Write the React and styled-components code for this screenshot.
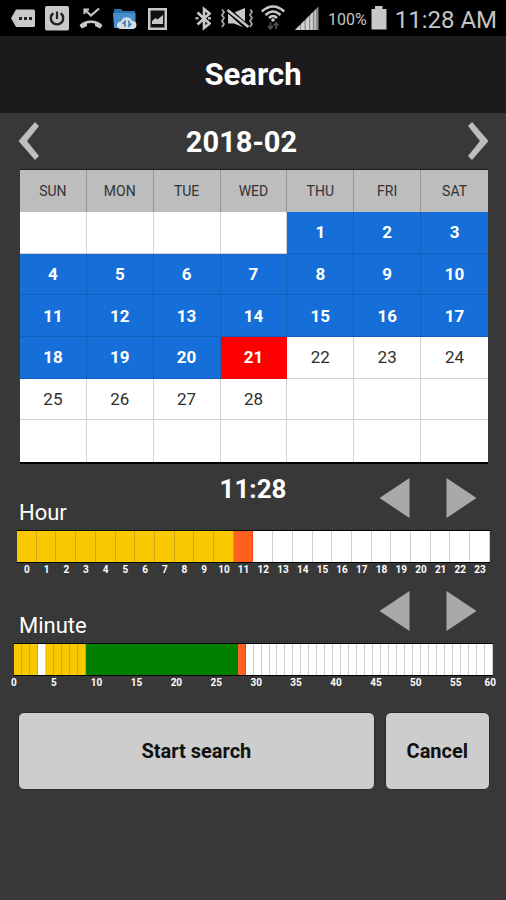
import React from 'react';
import styled, { createGlobalStyle } from 'styled-components';

const GlobalStyle = createGlobalStyle`
  * {
    box-sizing: border-box;
  }
  body {
    margin: 0;
    background-color: #383838;
    font-family: Roboto, "Liberation Sans", sans-serif;
  }
  button {
    font-family: inherit;
    cursor: pointer;
  }
`

const Page = styled.div`
  min-height: 100vh;
  background-color: #383838;
  color: white;
`

const StatusBar = styled.div`
  display: flex;
  align-items: center;
  justify-content: space-between;
  height: 36px;
  padding: 0 9px 0 11px;
  background-color: black;
  color: #c4c4c4;
  svg {
    display: block;
    flex: none;
  }
`

const StatusGroup = styled.div`
  display: flex;
  align-items: center;
  gap: ${props => props.$gap}px;
`

const Percent = styled.span`
  font-size: 16px;
  line-height: 40px;
  height: 36px;
`

const Clock = styled.span`
  font-size: 24px;
  line-height: 40px;
  height: 36px;
  white-space: nowrap;
`

const Header = styled.header`
  display: flex;
  align-items: center;
  justify-content: center;
  height: 77px;
  background-color: #1c1a1d;
`

const Title = styled.h1`
  margin: 0;
  font-size: 31px;
  line-height: 40px;
  font-weight: 700;
`

const MonthBar = styled.div`
  display: flex;
  align-items: center;
  height: 56px;
  padding: 0 17px 0 18px;
`

const MonthTitle = styled.h2`
  flex: 1;
  margin: 0;
  padding: 2px 24px 0 0;
  text-align: center;
  font-size: 29px;
  line-height: 40px;
  font-weight: 700;
`

const IconButton = styled.button`
  display: block;
  padding: 0;
  border: none;
  background: none;
  color: ${props => props.$color};
  svg {
    display: block;
  }
`

const CalendarWrap = styled.div`
  padding: 0 18px 0 20px;
`

const Calendar = styled.table`
  width: 100%;
  height: 295px;
  table-layout: fixed;
  border-collapse: separate;
  border-spacing: 0;
  border-top: 1px solid #1a1a1a;
  border-bottom: 2px solid black;
  text-align: center;
`

const DayName = styled.th`
  height: 42px;
  padding: 0;
  background-color: #bdbdbd;
  color: #333;
  font-size: 14px;
  font-weight: 400;
  border-right: 1px solid #969696;
  &:last-child {
    border-right: none;
  }
`

const fills = {
  recorded: '#166fd8',
  selected: '#ff0000',
  plain: '#ffffff',
}

const lines = {
  recorded: '#1260bd',
  selected: '#ff0000',
  plain: '#d2d2d2',
}

const Day = styled.td`
  height: 41px;
  padding: 0;
  background-color: ${props => fills[props.$kind]};
  color: ${props => (props.$kind === 'plain' ? '#2e2e2e' : 'white')};
  font-size: 17px;
  line-height: 20px;
  font-weight: ${props => (props.$kind === 'plain' ? 400 : 700)};
  border-right: 1px solid ${props => lines[props.$kind]};
  border-bottom: 1px solid ${props => lines[props.$kind]};
  &:last-child {
    border-right: none;
  }
  tr:last-child & {
    border-bottom: none;
  }
`

const Section = styled.section`
  padding-top: 14px;
`

const SectionHead = styled.div`
  display: grid;
  grid-template-columns: 1fr auto 1fr;
  height: 53px;
  padding: 0 19px;
`

const Label = styled.h3`
  align-self: end;
  margin: 0;
  padding-bottom: 4px;
  font-size: 22px;
  line-height: 28px;
  font-weight: 400;
`

const Time = styled.div`
  font-size: 26px;
  line-height: 22px;
  font-weight: 700;
`

const Arrows = styled.div`
  display: flex;
  align-items: flex-start;
  justify-content: flex-end;
  gap: 36px;
  grid-column: 3;
  padding-right: 10px;
`

const Track = styled.div`
  padding: 0 ${props => props.$right}px 0 ${props => props.$left}px;
`

const Bar = styled.div`
  display: flex;
  height: 33px;
  margin-top: -1px;
  border-top: 1px solid black;
  border-bottom: 1px solid black;
`

const cellFill = {
  yellow: '#fac800',
  green: '#008000',
  orange: '#ff6020',
  white: '#ffffff',
}

const cellLine = {
  yellow: '#cda612',
  green: '#0b700b',
  orange: '#ff4010',
  white: '#cfcfcf',
}

const Cell = styled.div`
  flex: 1;
  background-color: ${props => cellFill[props.$fill]};
  border-right: 1px solid ${props => cellLine[props.$fill]};
`

const Scale = styled.div`
  display: flex;
  height: 14px;
  font-size: 10px;
  line-height: 14px;
  font-weight: 700;
`

const HourScale = styled(Scale)`
  span {
    flex: 1;
    text-align: center;
  }
`

// every mark starts just before its tick, the last one ends at the bar's edge
const MinuteScale = styled(Scale)`
  justify-content: space-between;
  margin: 0 -3px;
  span {
    display: flex;
    width: 6px;
  }
  span:last-child {
    justify-content: flex-end;
  }
`

const Actions = styled.div`
  display: flex;
  gap: 10px;
  padding: 22px 16px 20px 18px;
`

const ActionButton = styled.button`
  flex: ${props => props.$grow};
  height: 78px;
  padding: 0;
  border: 1px solid #2a2a2a;
  border-radius: 6px;
  background-color: #cdcdcd;
  color: #111;
  font-size: 20px;
  font-weight: 700;
`

const dayNames = ['SUN', 'MON', 'TUE', 'WED', 'THU', 'FRI', 'SAT']
const firstWeekday = 4
const daysInMonth = 28
const today = 21

const weeks = Array.from({ length: 6 }, (_, w) =>
  Array.from({ length: 7 }, (_, d) => {
    const day = w * 7 + d - firstWeekday + 1
    return day > 0 && day <= daysInMonth ? day : null
  })
)

const dayKind = (day) => {
  if (!day || day > today) return 'plain'
  return day === today ? 'selected' : 'recorded'
}

const hourFill = (hour) => {
  if (hour < 11) return 'yellow'
  return hour === 11 ? 'orange' : 'white'
}

const minuteFill = (minute) => {
  if (minute === 3) return 'white'
  if (minute < 9) return 'yellow'
  if (minute < 28) return 'green'
  return minute === 28 ? 'orange' : 'white'
}

const hours = Array.from({ length: 24 }, (_, i) => i)
const minutes = Array.from({ length: 60 }, (_, i) => i)
const minuteMarks = Array.from({ length: 13 }, (_, i) => i * 5)

const LeftIcons = () => (
  <StatusGroup $gap={10}>
    <svg width="24" height="36" viewBox="0 0 24 36">
      <path d="M0 18.3 L5 9.5 H22.5 Q24 9.5 24 11 V25.5 Q24 27 22.5 27 H5 Z" fill="#c8c8c8" />
      <path d="M8 17h3v3H8z M13 17h3v3h-3z M18 17h3v3h-3z" fill="#222" />
    </svg>
    <svg width="24" height="36" viewBox="0 0 24 36">
      <rect x="0" y="6" width="24" height="24.5" rx="2" fill="#c8c8c8" />
      <path d="M8.3 13.2 A6.2 6.2 0 1 0 15.7 13.2" fill="none" stroke="#222" strokeWidth="2.4" />
      <path d="M12 11.5 V19" stroke="#222" strokeWidth="2.2" />
    </svg>
    <svg width="24" height="36" viewBox="0 0 24 36">
      <path d="M0.5 25.5 C5 18.8 19 18.8 23.5 25.5 L21 28.5 L16 26 V23.5 Q12 22.3 8 23.5 V26 L3 28.5 Z" fill="#c8c8c8" />
      <path d="M5.5 14 V9.5 H10 M5.5 9.5 L12 15.5 L20 8.5" fill="none" stroke="#c8c8c8" strokeWidth="2.2" />
    </svg>
    <svg width="24" height="36" viewBox="0 0 24 36">
      <path d="M1 9 H8 L10 11 H22 V27 H1 Z" fill="#2c73ae" />
      <path d="M0 13 H22.5 V28 H1 Z" fill="#4590cc" />
      <path d="M7.5 29 Q3.5 28.5 4 24.8 Q4.6 21.8 8 21.6 Q9.5 17 14 17.2 Q18.2 17.6 19 21 Q23.5 21 23.5 25 Q23.3 28.6 20 29 Z" fill="#d5dde3" />
      <path d="M12 27 V21.5 L9.5 24 M16 20.5 V26 L18.5 23.5" fill="none" stroke="#3b80ba" strokeWidth="1.6" />
    </svg>
    <svg width="21" height="36" viewBox="0 0 21 36">
      <rect x="1" y="8" width="19" height="22" fill="#c8c8c8" />
      <rect x="3.5" y="10.5" width="14" height="17" fill="#111" />
      <path d="M5 24 V21 L8.5 18 L10.5 19.5 L16 15 V24 Z" fill="#c8c8c8" />
    </svg>
  </StatusGroup>
)

const RightIcons = () => (
  <StatusGroup $gap={8}>
    <svg width="16" height="36" viewBox="0 0 16 36">
      <path d="M2.5 12.5 L14.5 23.5 L9 28 V9 L14.5 13.5 L2.5 24.5" fill="none" stroke="#c8c8c8" strokeWidth="2.6" />
      <path d="M0.5 17h3v2.5h-3z M13 17h3v2.5h-3z" fill="#b5b5b5" />
    </svg>
    <svg width="34" height="36" viewBox="0 0 34 36">
      <path d="M9 12.5 H15 L26 8 V28 L15 23.5 H9 Z" fill="#c8c8c8" />
      <path d="M8 9 L29 28" stroke="black" strokeWidth="5.5" />
      <path d="M8.5 10 L29.5 27" stroke="#c8c8c8" strokeWidth="2.6" />
      <path d="M3 9.5 L5 12 L3 15 L5 18 L3 21 L5 24 L3 27 M31.5 9.5 L33 12 L31 15 L33 18 L31 21 L33 24 L31 27" fill="none" stroke="#a5a5a5" strokeWidth="1.8" />
    </svg>
    <svg width="25" height="36" viewBox="0 0 25 36">
      <path d="M0.8 11.5 Q12 1.5 23.2 11.5 M4.5 15 Q12 8 19.5 15 M8 18 Q12 14 16 18" fill="none" stroke="#c8c8c8" strokeWidth="2.5" />
      <circle cx="12" cy="20" r="1.8" fill="#c8c8c8" />
      <path d="M9.5 22.5 V28.5 M7 26 L9.5 28.8 L12 26 M15 29 V23 M12.8 25.5 L15 22.8 L17.5 25.5" fill="none" stroke="#4c4c4c" strokeWidth="1.8" />
    </svg>
    <svg width="26" height="36" viewBox="0 0 26 36">
      <path d="M1 30 L24.5 6.5 V30 Z" fill="#8a8a8a" />
      <path d="M1 30 L6 25 V30 Z M7 24 L10.5 20.5 V30 H7 Z M11.8 19.2 L15 16 V30 H11.8 Z M16.2 14.8 L18.8 12.2 V30 H16.2 Z M20.5 10.5 L21.8 9.2 V30 H20.5 Z" fill="#cfcfcf" />
    </svg>
    <StatusGroup $gap={4}>
      <Percent>100%</Percent>
      <svg width="16" height="36" viewBox="0 0 16 36">
        <path d="M4 6 H11.5 V9 H15.5 V29.5 H0.5 V9 H4 Z" fill="#c8c8c8" />
      </svg>
    </StatusGroup>
    <Clock>11:28 AM</Clock>
  </StatusGroup>
)

const StepArrows = ({ unit }) => (
  <Arrows>
    <IconButton $color="#a9a9a9" aria-label={`Previous ${unit}`}>
      <svg width="31" height="40" viewBox="0 0 31 40">
        <path d="M0.5 20 L30.5 0 V40 Z" fill="currentColor" />
      </svg>
    </IconButton>
    <IconButton $color="#a9a9a9" aria-label={`Next ${unit}`}>
      <svg width="31" height="40" viewBox="0 0 31 40">
        <path d="M30.5 20 L0.5 0 V40 Z" fill="currentColor" />
      </svg>
    </IconButton>
  </Arrows>
)

const App = () => {
  return (
    <Page>
      <GlobalStyle />
      <StatusBar>
        <LeftIcons />
        <RightIcons />
      </StatusBar>
      <Header>
        <Title>Search</Title>
      </Header>
      <MonthBar>
        <IconButton $color="#bdbdbd" aria-label="Previous month">
          <svg width="21" height="40" viewBox="0 0 21 40">
            <path d="M17 1 L21 5 L9 20 L21 35 L17 39 L0.5 20 Z" fill="currentColor" />
          </svg>
        </IconButton>
        <MonthTitle>2018-02</MonthTitle>
        <IconButton $color="#bdbdbd" aria-label="Next month">
          <svg width="21" height="40" viewBox="0 0 21 40">
            <path d="M4 1 L0 5 L12 20 L0 35 L4 39 L20.5 20 Z" fill="currentColor" />
          </svg>
        </IconButton>
      </MonthBar>
      <CalendarWrap>
        <Calendar>
          <thead>
            <tr>
              {dayNames.map(name => <DayName key={name} scope="col">{name}</DayName>)}
            </tr>
          </thead>
          <tbody>
            {weeks.map((week, w) => (
              <tr key={w}>
                {week.map((day, d) => (
                  <Day key={d} $kind={dayKind(day)}>{day}</Day>
                ))}
              </tr>
            ))}
          </tbody>
        </Calendar>
      </CalendarWrap>
      <Section>
        <SectionHead>
          <Label>Hour</Label>
          <Time>11:28</Time>
          <StepArrows unit="hour" />
        </SectionHead>
        <Track $left={17} $right={16}>
          <Bar>
            {hours.map(hour => <Cell key={hour} $fill={hourFill(hour)} />)}
          </Bar>
          <HourScale>
            {hours.map(hour => <span key={hour}>{hour}</span>)}
          </HourScale>
        </Track>
      </Section>
      <Section>
        <SectionHead>
          <Label>Minute</Label>
          <StepArrows unit="minute" />
        </SectionHead>
        <Track $left={14} $right={13}>
          <Bar>
            {minutes.map(minute => <Cell key={minute} $fill={minuteFill(minute)} />)}
          </Bar>
          <MinuteScale>
            {minuteMarks.map(mark => <span key={mark}>{mark}</span>)}
          </MinuteScale>
        </Track>
      </Section>
      <Actions>
        <ActionButton $grow="357 1 0">Start search</ActionButton>
        <ActionButton $grow="104 1 0">Cancel</ActionButton>
      </Actions>
    </Page>
  );
};

export default App;
